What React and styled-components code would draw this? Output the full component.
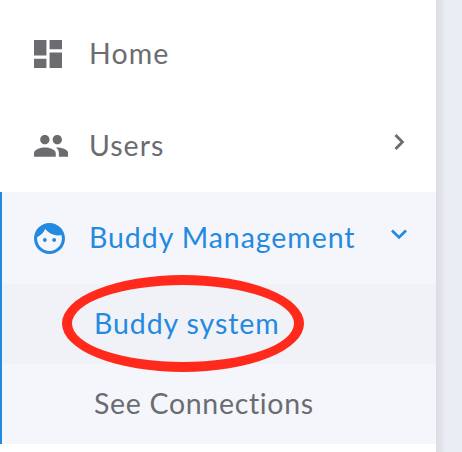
import React from 'react';
import styled, { createGlobalStyle } from 'styled-components';

const GlobalStyle = createGlobalStyle`
  * { box-sizing: border-box; }
  body { margin: 0; background: #eaeef4; overflow: hidden; }
`;

const Page = styled.div`
  height: 452px;
  display: flex;
  background: #eaeef4;
  font-family: Lato, sans-serif;
  font-size: 28.5px;
`;

const Sidebar = styled.nav`
  width: 436px;
  height: 452px;
  padding-top: 8px;
  background: #fff;
`;

const Gutter = styled.div`
  flex: 1;
  background: linear-gradient(to right, #dadee2 0, #e1e5ea 5px, #eaeef4 10px);
`;

const Item = styled.div`
  height: 92px;
  display: flex;
  align-items: center;
  padding: 0 30px 0 ${(p) => (p.$active ? 32 : 34)}px;
  color: ${(p) => (p.$active ? '#238ae0' : '#6b6c70')};
`;

const IconSlot = styled.span`
  width: 55px;
  display: flex;
  align-items: center;

  svg { display: block; fill: currentColor; }
`;

const Label = styled.span`
  line-height: 34px;
  padding-bottom: 2px;
  white-space: nowrap;
  letter-spacing: ${(p) => p.$tracking}px;
`;

const Chevron = styled.svg`
  width: 18px;
  height: 18px;
  margin: 0 -2px 8px auto;
  fill: none;
  stroke: currentColor;
  stroke-width: 2.8;
`;

const Group = styled.section`
  border-left: 2px solid #238ae0;
  background: #f5f6fb;
`;

const SubItem = styled.div`
  position: relative;
  height: 80px;
  display: flex;
  align-items: center;
  padding-left: 92px;
  background: ${(p) => (p.$selected ? '#f1f2f7' : 'transparent')};
  color: ${(p) => (p.$selected ? '#238ae0' : '#6b6c70')};
`;

const Highlight = styled.span`
  position: absolute;
  left: 60px;
  top: -9px;
  width: 242px;
  height: 97px;
  border: 10px solid #ff2a1b;
  border-radius: 50%;
`;

const DashboardIcon = () => (
  <svg width="28" height="28" viewBox="3 3 18 18">
    <path d="M3 13h8V3H3v10zm0 8h8v-6H3v6zm10 0h8V11h-8v10zm0-18v6h8V3h-8z" />
  </svg>
);

const PeopleIcon = () => (
  <svg width="34.2" height="21.8" viewBox="1 5 22 14">
    <path d="M16 11c1.66 0 2.99-1.34 2.99-3S17.66 5 16 5s-3 1.34-3 3 1.34 3 3 3zm-8 0c1.66 0 2.99-1.34 2.99-3S9.66 5 8 5 5 6.34 5 8s1.34 3 3 3zm0 2c-2.33 0-7 1.17-7 3.5V19h14v-2.5c0-2.33-4.67-3.5-7-3.5zm8 0c-.29 0-.62.02-.97.05 1.16.84 1.97 1.97 1.97 3.45V19h6v-2.5c0-2.33-4.67-3.5-7-3.5z" />
  </svg>
);

const FaceIcon = () => (
  <svg width="31" height="31" viewBox="2 2 20 20">
    <path d="M9 11.75c-.69 0-1.25.56-1.25 1.25s.56 1.25 1.25 1.25 1.25-.56 1.25-1.25-.56-1.25-1.25-1.25zm6 0c-.69 0-1.25.56-1.25 1.25s.56 1.25 1.25 1.25 1.25-.56 1.25-1.25-.56-1.25-1.25-1.25zM12 2C6.48 2 2 6.48 2 12s4.48 10 10 10 10-4.48 10-10S17.52 2 12 2zm0 18c-4.41 0-8-3.59-8-8 0-.29.02-.58.05-.86 2.36-1.05 4.23-2.98 5.21-5.37C11.07 8.33 14.05 10 17.42 10c.78 0 1.53-.09 2.25-.26.21.71.33 1.47.33 2.26 0 4.41-3.59 8-8 8z" />
  </svg>
);

export default function App() {
  return (
    <Page>
      <GlobalStyle />
      <Sidebar>
        <Item>
          <IconSlot><DashboardIcon /></IconSlot>
          <Label $tracking={1.1}>Home</Label>
        </Item>
        <Item>
          <IconSlot><PeopleIcon /></IconSlot>
          <Label $tracking={1}>Users</Label>
          <Chevron viewBox="0 0 18 18"><path d="M5.5 2 12.4 9 5.5 16" /></Chevron>
        </Item>
        <Group>
          <Item $active>
            <IconSlot><FaceIcon /></IconSlot>
            <Label $tracking={0.93}>Buddy Management</Label>
            <Chevron viewBox="0 0 18 18"><path d="M2 5.5 9 12.4 16 5.5" /></Chevron>
          </Item>
          <SubItem $selected>
            <Label $tracking={0.9}>Buddy system</Label>
            <Highlight />
          </SubItem>
          <SubItem>
            <Label $tracking={0.68}>See Connections</Label>
          </SubItem>
        </Group>
      </Sidebar>
      <Gutter />
    </Page>
  );
}
